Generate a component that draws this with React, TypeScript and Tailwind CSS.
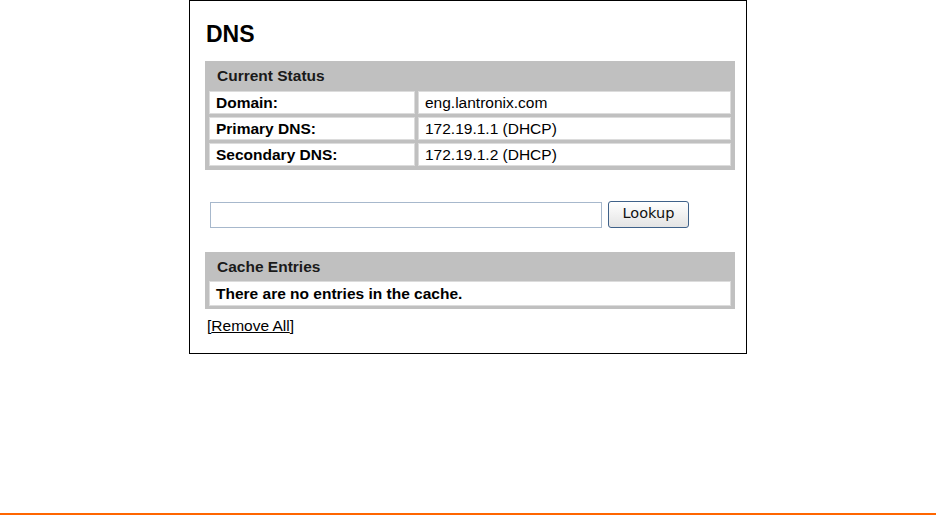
// DNS status panel: current status table, lookup form, cache entries.

const rows = [
  { label: "Domain:", value: "eng.lantronix.com" },
  { label: "Primary DNS:", value: "172.19.1.1 (DHCP)" },
  { label: "Secondary DNS:", value: "172.19.1.2 (DHCP)" },
];

export default function App() {
  return (
    <div className="relative flex h-[516px] w-[936px] flex-col bg-white font-['Liberation_Sans',Arial,sans-serif] text-black">
      <div className="ml-[189px] h-[354px] w-[558px] border border-black pl-[15px]">
        <h1 className="mt-[22px] ml-[1px] h-[22px] text-[23px] font-bold leading-[22px]">DNS</h1>

        {/* Current status */}
        <div className="mt-[16px] w-[530px] bg-[#c0c0c0] px-[4px] pb-[4px]">
          <div className="flex h-[30px] items-center pl-[8px] text-[15.5px] font-bold text-[#1a1a1a]">
            Current Status
          </div>
          <div className="flex flex-col gap-[3px]">
            {rows.map((r) => (
              <div key={r.label} className="flex h-[23px] gap-[3px] text-[15.5px]">
                <div className="flex w-[206px] items-center border border-[#dcdcdc] bg-white pl-[6px] font-bold">
                  {r.label}
                </div>
                <div className="flex flex-1 items-center border border-[#dcdcdc] bg-white pl-[6px]">
                  {r.value}
                </div>
              </div>
            ))}
          </div>
        </div>

        {/* Lookup */}
        <div className="mt-[31px] flex h-[27px] items-center pl-[5px]">
          <input
            type="text"
            className="h-[26px] w-[392px] border border-[#a7b8cc] bg-white outline-none"
          />
          <button className="ml-[6px] h-[27px] w-[81px] rounded-[3px] border border-[#3f6189] bg-gradient-to-b from-white to-[#e4e4e4] pb-[1px] font-['DejaVu_Sans',Verdana,sans-serif] text-[14.5px] text-[#111]">
            Lookup
          </button>
        </div>

        {/* Cache entries */}
        <div className="mt-[24px] w-[530px] bg-[#c0c0c0] px-[4px] pb-[3px]">
          <div className="flex h-[29px] items-center pl-[8px] text-[15.5px] font-bold text-[#1a1a1a]">
            Cache Entries
          </div>
          <div className="flex h-[25px] items-center border border-[#dcdcdc] bg-white pl-[6px] text-[15.5px] font-bold">
            There are no entries in the cache.
          </div>
        </div>

        <div className="mt-[8px] pl-[2px] text-[15.5px] leading-[18px]">
          [<a href="#" className="text-black underline">Remove All</a>]
        </div>
      </div>

      <div className="mt-auto mb-[1px] h-[2px] w-full bg-[#ff6600]" />
    </div>
  );
}
